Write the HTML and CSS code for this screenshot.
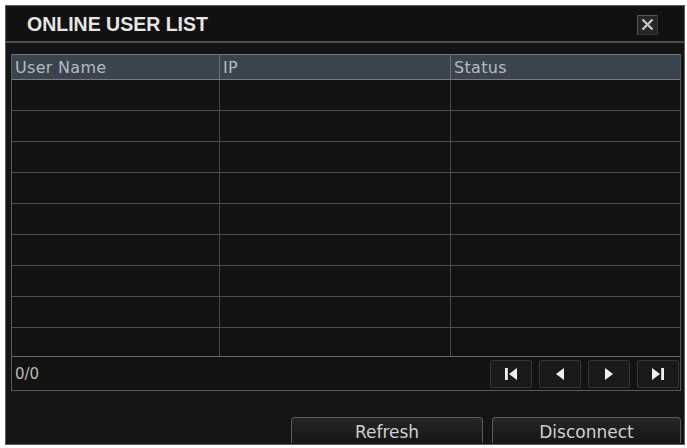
FILE: index.html
```
<!DOCTYPE html>
<html>
<head>
<meta charset="utf-8">
<link rel="stylesheet" href="styles.css">
</head>
<body>
<div class="frame">
  <div class="titlebar">
    <span class="title">ONLINE USER LIST</span>
    <span class="close">
      <svg width="13" height="13" viewBox="0 0 13 13"><path d="M1.5 1.5 L11.5 11.5 M11.5 1.5 L1.5 11.5" stroke="#c4c4c4" stroke-width="2.4" fill="none"/></svg>
    </span>
  </div>
  <div class="list">
    <div class="row head">
      <div class="cell">User Name</div>
      <div class="cell">IP</div>
      <div class="cell">Status</div>
    </div>
    <div class="row"><div class="cell"></div><div class="cell"></div><div class="cell"></div></div>
    <div class="row"><div class="cell"></div><div class="cell"></div><div class="cell"></div></div>
    <div class="row"><div class="cell"></div><div class="cell"></div><div class="cell"></div></div>
    <div class="row"><div class="cell"></div><div class="cell"></div><div class="cell"></div></div>
    <div class="row"><div class="cell"></div><div class="cell"></div><div class="cell"></div></div>
    <div class="row"><div class="cell"></div><div class="cell"></div><div class="cell"></div></div>
    <div class="row"><div class="cell"></div><div class="cell"></div><div class="cell"></div></div>
    <div class="row"><div class="cell"></div><div class="cell"></div><div class="cell"></div></div>
    <div class="row last"><div class="cell"></div><div class="cell"></div><div class="cell"></div></div>
    <div class="footer">
      <span class="count">0/0</span>
      <div class="nav">
        <span class="navbtn"><svg width="14" height="12" viewBox="0 0 14 12"><rect x="1" y="0" width="2.8" height="12" fill="#f0f0f0"/><path d="M13 0 L5 6 L13 12 Z" fill="#f0f0f0"/></svg></span>
        <span class="navbtn"><svg width="10" height="12" viewBox="0 0 10 12"><path d="M9 0 L1 6 L9 12 Z" fill="#f0f0f0"/></svg></span>
        <span class="navbtn"><svg width="10" height="12" viewBox="0 0 10 12"><path d="M1 0 L9 6 L1 12 Z" fill="#f0f0f0"/></svg></span>
        <span class="navbtn"><svg width="14" height="12" viewBox="0 0 14 12"><path d="M1 0 L9 6 L1 12 Z" fill="#f0f0f0"/><rect x="10.2" y="0" width="2.8" height="12" fill="#f0f0f0"/></svg></span>
      </div>
    </div>
  </div>
  <div class="actions">
    <span class="btn refresh">Refresh</span>
    <span class="btn disconnect">Disconnect</span>
  </div>
</div>
</body>
</html>
```
FILE: styles.css
```
html, body {
  margin: 0;
  padding: 0;
  background: #ffffff;
}
body {
  font-family: "DejaVu Sans", "Liberation Sans", sans-serif;
}
.frame {
  margin: 5px 0 0 5px;
  width: 678px;
  height: 438px;
  border: 1px solid #5e5e5e;
  background: #141414;
  overflow: hidden;
}
.titlebar {
  height: 35px;
  display: flex;
  align-items: center;
  justify-content: space-between;
  padding: 0 26px 0 21px;
  background: #111111;
  border-bottom: 2px solid #4c4c4c;
}
.title {
  font-family: "Liberation Sans", Arial, sans-serif;
  font-weight: bold;
  font-size: 19.5px;
  color: #e6e6e6;
  margin-top: 1px;
}
.close {
  width: 19px;
  height: 18px;
  border: 1px solid #575757;
  border-right-color: #333;
  border-bottom-color: #333;
  background: #262626;
  display: flex;
  align-items: center;
  justify-content: center;
  margin-top: 2px;
}
.list {
  margin: 11px 0 0 5px;
  width: 668px;
  border-left: 1px solid #5a5a5a;
  border-right: 1px solid #5a5a5a;
}
.row {
  display: grid;
  grid-template-columns: 208px 231px 1fr;
  height: 30px;
  border-bottom: 1px solid #4e4e4e;
  background: #121212;
}
.row.last {
  height: 28px;
  border-bottom-color: #666;
}
.row .cell {
  border-right: 1px solid #4a4a4a;
}
.row .cell:last-child {
  border-right: none;
}
.row.head {
  height: 24px;
  background: #3a444f;
  border-top: 1px solid #6d757e;
  border-bottom: 1px solid #7a7a7a;
}
.row.head .cell {
  border-right-color: #6a7078;
  font-size: 16px;
  color: #b3bac2;
  line-height: 25px;
  padding-left: 3px;
  letter-spacing: 0.3px;
}
.footer {
  height: 33px;
  border-bottom: 1px solid #5a5a5a;
  display: flex;
  align-items: center;
  justify-content: space-between;
  padding: 0 1px 0 3px;
  background: #131313;
}
.count {
  font-size: 15px;
  color: #b8b8b8;
}
.nav {
  display: flex;
  gap: 7px;
}
.navbtn {
  width: 40px;
  height: 26px;
  border: 1px solid #353535;
  border-radius: 2px;
  background: #1a1a1a;
  display: flex;
  align-items: center;
  justify-content: center;
}
.actions {
  display: flex;
  justify-content: flex-end;
  gap: 9px;
  margin-top: 26px;
  padding-right: 3px;
}
.btn {
  height: 26px;
  border: 1px solid #5a5a5a;
  border-bottom: none;
  border-radius: 4px 4px 0 0;
  background: linear-gradient(#262626, #161616);
  color: #cfcfcf;
  font-size: 17px;
  display: flex;
  align-items: center;
  justify-content: center;
  padding-top: 2px;
  box-sizing: border-box;
}
.refresh {
  width: 192px;
}
.disconnect {
  width: 189px;
}
```
